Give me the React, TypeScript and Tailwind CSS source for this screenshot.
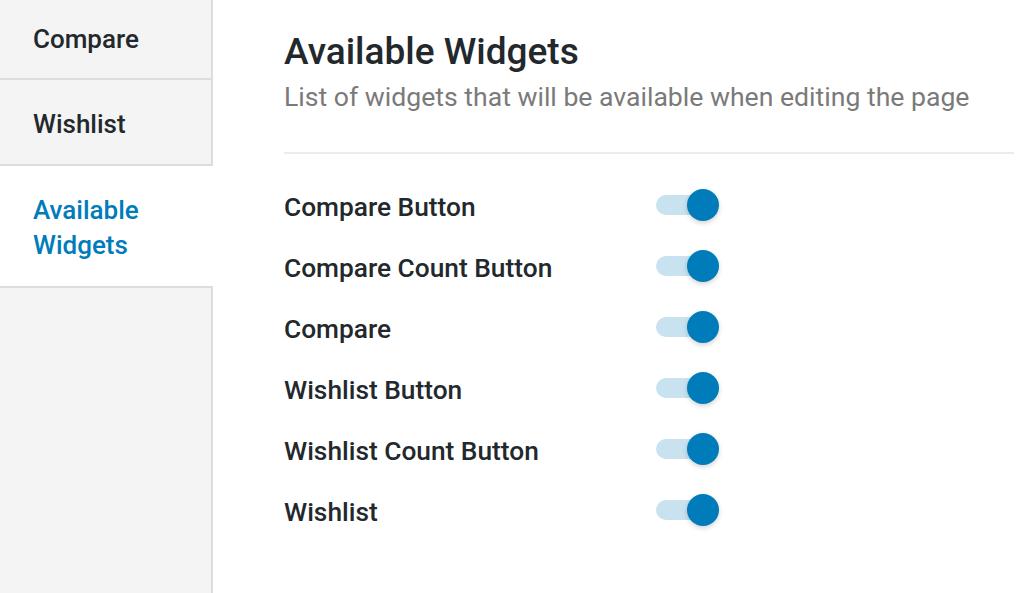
import { useState } from "react";

const widgets = [
  "Compare Button",
  "Compare Count Button",
  "Compare",
  "Wishlist Button",
  "Wishlist Count Button",
  "Wishlist",
];

const Toggle = ({ on, onClick }: { on: boolean; onClick: () => void }) => {
  return (
    <button onClick={onClick} className="relative w-[63px] h-[32px] flex items-center">
      <span
        className={`block w-[58px] h-[20px] rounded-full ${
          on ? "bg-[#c9e2f0]" : "bg-[#dcdcdc]"
        }`}
      />
      <span
        className={`absolute top-0 w-[32px] h-[32px] rounded-full shadow-[0_2px_5px_rgba(0,0,0,0.18)] ${
          on ? "left-[31px] bg-[#007cba]" : "left-0 bg-white"
        }`}
      />
    </button>
  );
};

const App = () => {
  const [enabled, setEnabled] = useState<boolean[]>(widgets.map(() => true));

  const handleToggle = (index: number) => {
    setEnabled(enabled.map((v, i) => (i === index ? !v : v)));
  };

  return (
    <div
      className="flex w-full h-[593px] bg-white overflow-hidden"
      style={{ fontFamily: "Roboto, 'Liberation Sans', sans-serif" }}
    >
      <div className="flex flex-col w-[213px] shrink-0">
        <div className="h-[80px] flex items-center pl-[33px] bg-[#f4f4f4] border-b-2 border-r-2 border-[#dddddd] text-[26px] font-medium text-[#23282d]">
          Compare
        </div>
        <div className="h-[86px] flex items-center pl-[33px] pt-[4px] bg-[#f4f4f4] border-b-2 border-r-2 border-[#dddddd] text-[26px] font-medium text-[#23282d]">
          Wishlist
        </div>
        <div className="h-[120px] flex items-center pl-[33px] pt-[4px] bg-white text-[26px] leading-[35px] font-medium text-[#007cba]">
          Available
          <br />
          Widgets
        </div>
        <div className="flex-1 bg-[#f4f4f4] border-t-2 border-r-2 border-[#dddddd]" />
      </div>

      <div className="flex-1 pl-[71px] pr-[10px] pt-[30px]">
        <h1 className="text-[37px] leading-[44px] font-medium text-[#23282d]">
          Available Widgets
        </h1>
        <p className="mt-[7px] text-[26.6px] leading-[32px] text-[#7a7a7a]">
          List of widgets that will be available when editing the page
        </p>
        <div className="mt-[39px] h-[2px] bg-[#ececec]" />
        <div className="flex flex-col mt-[35px] gap-[29px]">
          {widgets.map((widget, index) => (
            <div key={index} className="flex items-center h-[32px]">
              <span className="w-[372px] text-[26.3px] font-medium text-[#23282d] translate-y-[3px]">
                {widget}
              </span>
              <Toggle on={enabled[index]} onClick={() => handleToggle(index)} />
            </div>
          ))}
        </div>
      </div>
    </div>
  );
};

export default App;
